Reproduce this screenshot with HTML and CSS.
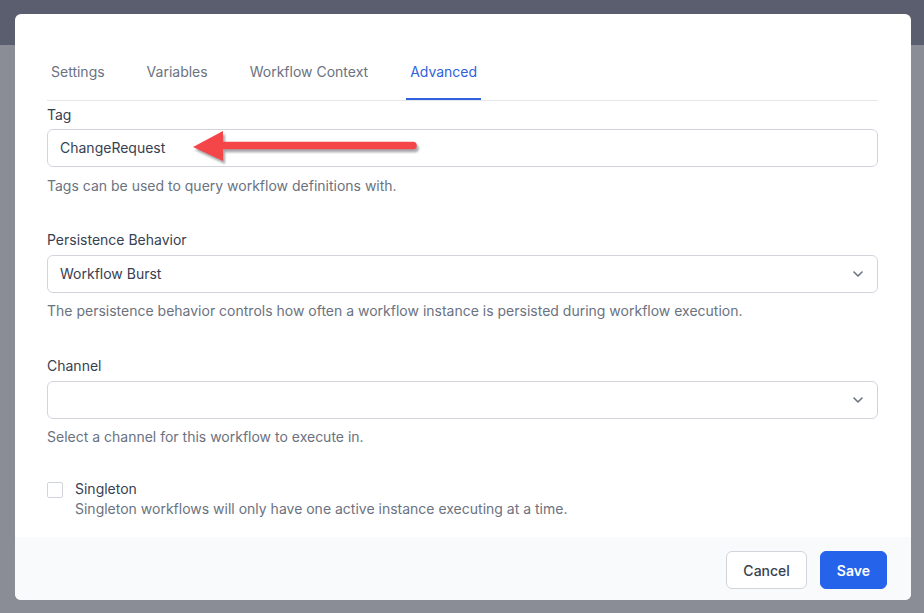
FILE: index.html
```html
<!DOCTYPE html>
<html lang="en">
<head>
<meta charset="utf-8">
<title>Workflow Settings</title>
<link rel="stylesheet" href="styles.css">
</head>
<body>
<div class="modal">
  <div class="modal-body">
    <nav class="tabs">
      <span class="tab">Settings</span>
      <span class="tab">Variables</span>
      <span class="tab">Workflow Context</span>
      <span class="tab active">Advanced</span>
    </nav>

    <div class="field field-tag">
      <label class="label">Tag</label>
      <div class="input-wrap">
        <div class="input">ChangeRequest</div>
        <svg class="arrow" width="236" height="44" viewBox="0 0 236 44">
          <line x1="28" y1="18.5" x2="223" y2="18.5" stroke="#f44649" stroke-width="7.5" stroke-linecap="round"/>
          <polygon points="3,20 33,4 33,34" fill="#f44649"/>
        </svg>
      </div>
      <p class="help">Tags can be used to query workflow definitions with.</p>
    </div>

    <div class="field">
      <label class="label">Persistence Behavior</label>
      <div class="select">
        <span>Workflow Burst</span>
        <svg class="chev" width="10" height="6" viewBox="0 0 10 6"><path d="M1 1l4 4 4-4" fill="none" stroke="#6b7280" stroke-width="1.6" stroke-linecap="round" stroke-linejoin="round"/></svg>
      </div>
      <p class="help">The persistence behavior controls how often a workflow instance is persisted during workflow execution.</p>
    </div>

    <div class="field">
      <label class="label">Channel</label>
      <div class="select">
        <span></span>
        <svg class="chev" width="10" height="6" viewBox="0 0 10 6"><path d="M1 1l4 4 4-4" fill="none" stroke="#6b7280" stroke-width="1.6" stroke-linecap="round" stroke-linejoin="round"/></svg>
      </div>
      <p class="help">Select a channel for this workflow to execute in.</p>
    </div>

    <div class="check-row">
      <span class="checkbox"></span>
      <div class="check-text">
        <div class="check-label">Singleton</div>
        <div class="check-help">Singleton workflows will only have one active instance executing at a time.</div>
      </div>
    </div>
  </div>
  <div class="modal-footer">
    <button class="btn btn-cancel">Cancel</button>
    <button class="btn btn-save">Save</button>
  </div>
</div>
</body>
</html>
```

FILE: styles.css
```css
html, body {
  margin: 0;
  padding: 0;
}
body {
  width: 924px;
  height: 613px;
  overflow: hidden;
  background: linear-gradient(to bottom, #5b5e6f 0, #5b5e6f 45px, #8a8d96 45px, #8a8d96 100%);
  font-family: Inter, "Noto Sans", "Liberation Sans", sans-serif;
  font-size: 14px;
  line-height: 20px;
  color: #374151;
}
.modal {
  margin: 14px 0 0 15px;
  width: 896px;
  height: 586px;
  background: #ffffff;
  border-radius: 6px;
  display: flex;
  flex-direction: column;
  overflow: hidden;
}
.modal-body {
  flex: 1;
  padding: 48px 33px 0 32px;
}
.tabs {
  display: flex;
  gap: 34px;
  border-bottom: 1px solid #e5e7eb;
}
.tab {
  padding: 0 4px 16px;
  border-bottom: 2px solid transparent;
  color: #6b7280;
}
.tab.active {
  color: #2f62dc;
  border-bottom-color: #2f62dc;
}
.field {
  margin-top: 4px;
  margin-bottom: 35px;
}
.field-tag {
  margin-bottom: 34px;
}
.field + .field {
  margin-top: 0;
}
.label {
  display: block;
  color: #374151;
}
.input-wrap {
  position: relative;
  margin-top: 4px;
}
.input, .select {
  box-sizing: border-box;
  height: 38px;
  border: 1px solid #d1d5db;
  border-radius: 6px;
  padding: 0 12px;
  display: flex;
  align-items: center;
  color: #374151;
}
.select {
  margin-top: 5px;
  justify-content: space-between;
  padding-right: 14px;
}
.chev {
  display: block;
}
.arrow {
  position: absolute;
  left: 143px;
  top: -2px;
  filter: drop-shadow(2px 3px 1px rgba(60, 60, 70, 0.45));
}
.help {
  margin: 9px 0 0;
  color: #6b7280;
}
.select + .help {
  margin-top: 8px;
}
.check-row {
  display: flex;
  gap: 12px;
  margin-top: -3px;
}
.checkbox {
  box-sizing: border-box;
  width: 16px;
  height: 16px;
  margin-top: 3px;
  border: 1px solid #d1d5db;
  border-radius: 2px;
  background: #fff;
  flex: none;
}
.check-label {
  color: #374151;
  font-weight: 400;
}
.check-help {
  color: #6b7280;
}
.modal-footer {
  height: 63px;
  box-sizing: border-box;
  background: #f9fafb;
  display: flex;
  justify-content: flex-end;
  align-items: flex-start;
  gap: 13px;
  padding: 14px 24px 0 0;
}
.btn {
  box-sizing: border-box;
  height: 38px;
  padding: 0 16px;
  border-radius: 6px;
  font-family: inherit;
  font-size: 14px;
  font-weight: 500;
  cursor: pointer;
}
.btn-cancel {
  background: #ffffff;
  border: 1px solid #d1d5db;
  color: #374151;
}
.btn-save {
  background: #2563eb;
  border: 1px solid #2563eb;
  color: #ffffff;
  font-weight: 600;
}
```
